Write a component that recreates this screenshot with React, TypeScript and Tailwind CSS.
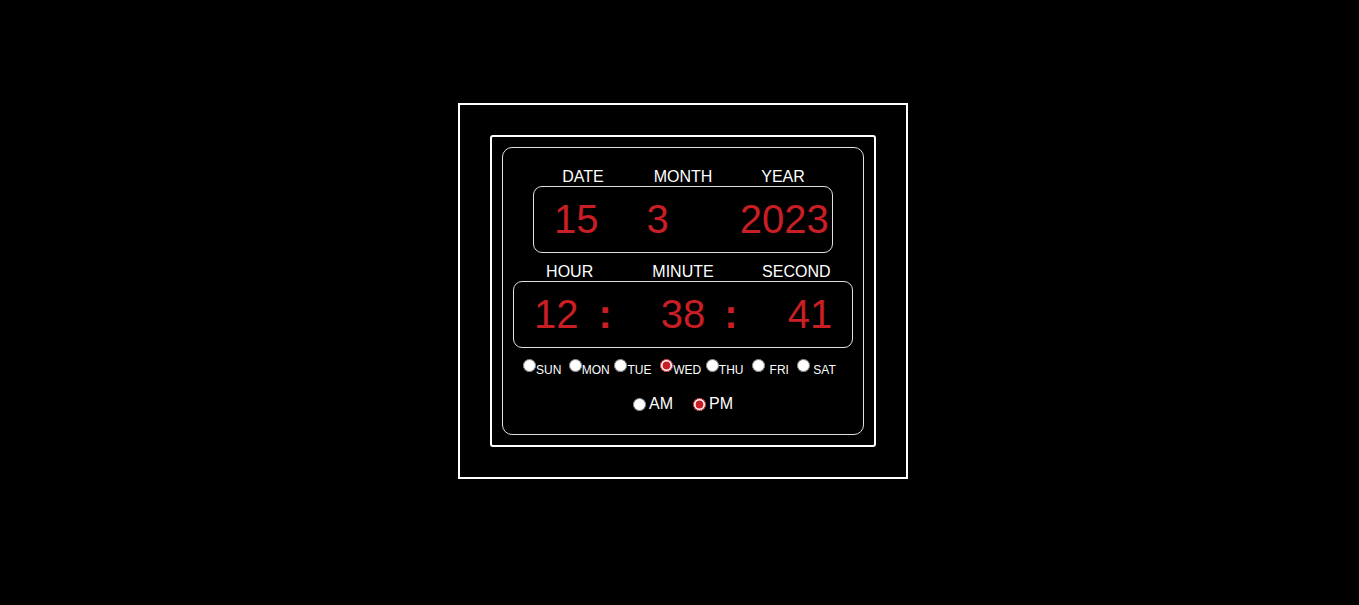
const days = [
  { label: 'SUN', pad: '' },
  { label: 'MON', pad: '' },
  { label: 'TUE', pad: '' },
  { label: 'WED', pad: '' },
  { label: 'THU', pad: '' },
  { label: 'FRI', pad: 'pl-[5px]' },
  { label: 'SAT', pad: 'pl-[3px]' },
]

const today = 'WED'

export default function App() {
  return (
    <div
      className="min-h-screen h-[605px] bg-black flex justify-center pt-[103px] pl-[7px] text-white"
      style={{ fontFamily: '"Liberation Sans", Arial, sans-serif' }}
    >
      {/* outer frame */}
      <div className="w-[450px] h-[376px] border-2 border-white p-[30px]">
        <div className="h-full border-2 border-white rounded-[3px] p-[10px]">
          <div className="h-full border border-[#e0e0e0] rounded-[10px] pt-[20px] flex flex-col items-center">
            {/* date */}
            <div className="w-[300px] grid grid-cols-3 text-center text-[16px] leading-[18px]">
              <span>DATE</span>
              <span>MONTH</span>
              <span>YEAR</span>
            </div>
            <div className="w-[300px] h-[67px] border border-[#e0e0e0] rounded-[9px] flex items-center pl-[20px] pb-[2px] text-[40px] text-[#c81e24]">
              <span>15</span>
              <span className="ml-[48px]">3</span>
              <span className="ml-[71px]">2023</span>
            </div>

            {/* time */}
            <div className="mt-[10px] w-[340px] grid grid-cols-3 text-center text-[16px] leading-[18px]">
              <span>HOUR</span>
              <span>MINUTE</span>
              <span>SECOND</span>
            </div>
            <div className="w-[340px] h-[67px] border border-[#e0e0e0] rounded-[9px] flex items-center pl-[20px] pb-[2px] text-[40px] text-[#c81e24]">
              <span>12</span>
              <span className="ml-[20px] font-bold">:</span>
              <span className="ml-[49px]">38</span>
              <span className="ml-[19px] font-bold">:</span>
              <span className="ml-[50px]">41</span>
            </div>

            {/* weekdays */}
            <div className="mt-[11px] w-[320px] grid grid-cols-7">
              {days.map((d) => (
                <label key={d.label} className="flex items-start">
                  <input
                    type="radio"
                    name="day"
                    defaultChecked={d.label === today}
                    className="w-[13px] h-[13px] m-0 shrink-0 accent-[#c81e24]"
                  />
                  <span className={`mt-[4px] text-[12px] leading-[14px] ${d.pad}`}>{d.label}</span>
                </label>
              ))}
            </div>

            {/* am / pm */}
            <div className="mt-[18px] flex items-center gap-[20px] text-[16px] leading-[18px]">
              <label className="flex items-center gap-[3px]">
                <input type="radio" name="ampm" className="w-[13px] h-[13px] m-0 accent-[#c81e24]" />
                <span>AM</span>
              </label>
              <label className="flex items-center gap-[3px]">
                <input type="radio" name="ampm" defaultChecked className="w-[13px] h-[13px] m-0 accent-[#c81e24]" />
                <span>PM</span>
              </label>
            </div>
          </div>
        </div>
      </div>
    </div>
  )
}
